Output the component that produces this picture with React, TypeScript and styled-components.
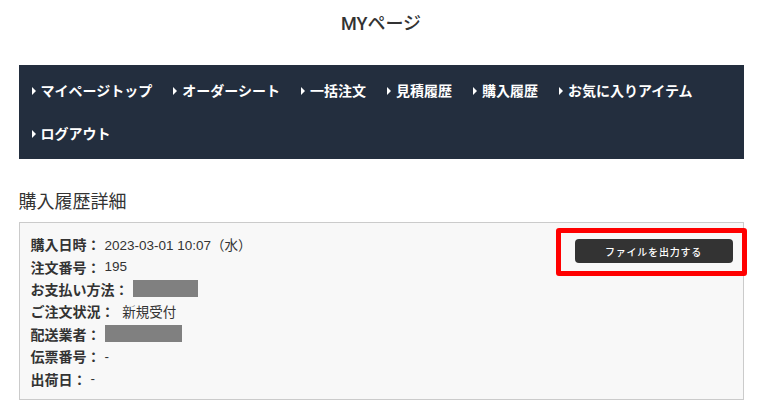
import React from 'react';
import styled, { createGlobalStyle } from 'styled-components';

const GlobalStyle = createGlobalStyle`
  body {
    margin: 0;
    background: #fff;
    color: #333;
    font-family: 'Liberation Sans', 'Noto Sans CJK JP', sans-serif;
  }
`;

const menu = ['マイページトップ', 'オーダーシート', '一括注文', '見積履歴', '購入履歴', 'お気に入りアイテム', 'ログアウト'];

interface DetailRow {
  label: string;
  value?: string;
  masked?: number;
}

const details: DetailRow[] = [
  { label: '購入日時', value: '2023-03-01 10:07（水）' },
  { label: '注文番号', value: '195' },
  { label: 'お支払い方法', masked: 65 },
  { label: 'ご注文状況', value: '\u00a0新規受付' },
  { label: '配送業者', masked: 77 },
  { label: '伝票番号', value: '-' },
  { label: '出荷日', value: '-' },
];

const App = () => {
  return (
    <Page>
      <GlobalStyle />
      <Title>MYページ</Title>
      <Nav>
        <MenuList>
          {menu.map((item) => (
            <MenuItem key={item}>{item}</MenuItem>
          ))}
        </MenuList>
      </Nav>
      <SectionTitle>購入履歴詳細</SectionTitle>
      <DetailBox>
        <DetailList>
          {details.map((row) => (
            <Line key={row.label}>
              <Label>{row.label}：</Label>
              {row.masked ? <Masked style={{ width: row.masked }} /> : <Value>{row.value}</Value>}
            </Line>
          ))}
        </DetailList>
        <ButtonWrap>
          <ExportButton>ファイルを出力する</ExportButton>
          <Highlight />
        </ButtonWrap>
      </DetailBox>
    </Page>
  );
};

const Page = styled.div`
  width: 725px;
  margin: 0 auto;
  padding-top: 12px;
`;

const Title = styled.h1`
  margin: 0 0 29px;
  text-align: center;
  font-family: 'Roboto', 'Noto Sans CJK JP', sans-serif;
  font-size: 18px;
  font-weight: 500;
  line-height: 24px;
  color: #333;
`;

const Nav = styled.nav`
  background: #232e3e;
  padding: 4px 13px;
`;

const MenuList = styled.ul`
  display: flex;
  flex-wrap: wrap;
  margin: 0;
  padding: 0;
  list-style: none;
`;

const MenuItem = styled.li`
  display: flex;
  align-items: center;
  margin-right: 21px;
  line-height: 43px;
  font-family: 'Noto Sans CJK JP', sans-serif;
  font-size: 14px;
  font-weight: 700;
  color: #fff;
  &::before {
    content: '';
    width: 0;
    height: 0;
    margin-right: 5px;
    border-left: 4px solid #fff;
    border-top: 4px solid transparent;
    border-bottom: 4px solid transparent;
  }
`;

const SectionTitle = styled.h2`
  margin: 29px 0 10px;
  font-family: 'Noto Sans CJK JP', sans-serif;
  font-size: 18px;
  font-weight: 400;
  line-height: 24px;
  color: #333;
`;

const DetailBox = styled.div`
  display: flex;
  justify-content: space-between;
  align-items: flex-start;
  background: #f8f8f8;
  border: 1px solid #cbcbcb;
  padding: 10px 10px 9px 11px;
`;

const DetailList = styled.div`
  display: flex;
  flex-direction: column;
`;

const Line = styled.div`
  display: flex;
  align-items: center;
  height: 22.4px;
  font-size: 14px;
  color: #333;
`;

const Label = styled.span`
  margin-right: 4px;
  font-family: 'Noto Sans CJK JP', sans-serif;
  font-weight: 700;
`;

const Value = styled.span`
  font-family: 'Liberation Sans', 'Noto Sans CJK JP', sans-serif;
  font-size: 13.5px;
`;

const Masked = styled.span`
  display: inline-block;
  height: 17px;
  background: #808080;
`;

const ButtonWrap = styled.div`
  position: relative;
  margin-top: 6px;
`;

const ExportButton = styled.button`
  display: block;
  width: 158px;
  height: 24px;
  border: none;
  border-radius: 4px;
  background: #333;
  color: #fff;
  font-family: 'Noto Sans CJK JP', sans-serif;
  font-size: 10px;
  font-weight: 500;
  letter-spacing: 0.8px;
  cursor: pointer;
`;

const Highlight = styled.div`
  position: absolute;
  top: -11px;
  left: -19px;
  right: -14px;
  bottom: -13px;
  border: 5px solid #ff0000;
  border-radius: 3px;
  pointer-events: none;
`;

export default App;
